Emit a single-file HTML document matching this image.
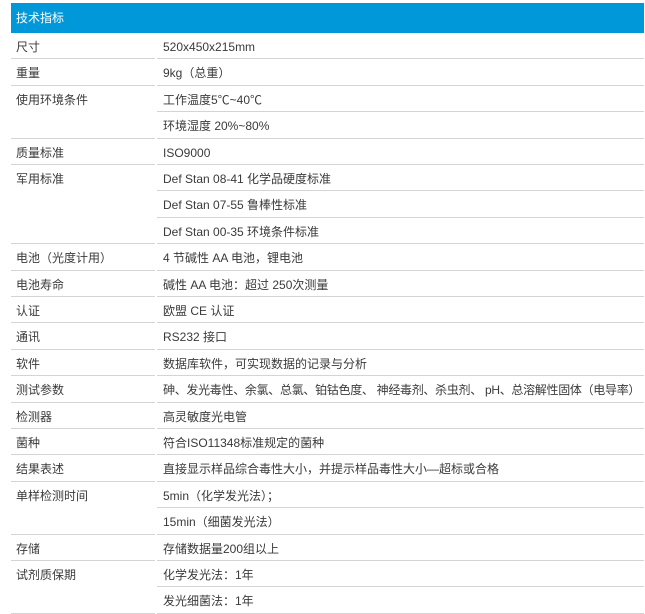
<!DOCTYPE html>
<html><head><meta charset="utf-8"><style>
body{margin:0;background:#fff;width:645px;height:611px;overflow:hidden;position:relative;font-family:"Liberation Sans","Noto Sans CJK SC",sans-serif;font-size:12px;color:#3a3a3a}
.h{position:absolute;left:11px;top:3px;width:633px;height:30px;background:#0098d9;color:#fff;line-height:30px;text-indent:5px}
.c{position:absolute;box-sizing:border-box;border-bottom:1px solid #d4d4d4;padding-left:5px;line-height:28px;white-space:nowrap;overflow:hidden}
.l{left:11px;width:144px}
.r{left:157px;width:487px;padding-left:6px}
</style></head><body>
<div class="h">技术指标</div>
<div class="c l" style="top:33px;height:26px">尺寸</div><div class="c r" style="top:33px;height:26px">520x450x215mm</div>
<div class="c l" style="top:59px;height:27px">重量</div><div class="c r" style="top:59px;height:27px">9kg（总重）</div>
<div class="c l" style="top:86px;height:53px">使用环境条件</div><div class="c r" style="top:86px;height:26px">工作温度5℃~40℃</div>
<div class="c r" style="top:112px;height:27px">环境湿度 20%~80%</div>
<div class="c l" style="top:139px;height:26px">质量标准</div><div class="c r" style="top:139px;height:26px">ISO9000</div>
<div class="c l" style="top:165px;height:79px">军用标准</div><div class="c r" style="top:165px;height:26px">Def Stan 08-41 化学品硬度标准</div>
<div class="c r" style="top:191px;height:27px">Def Stan 07-55 鲁棒性标准</div>
<div class="c r" style="top:218px;height:26px">Def Stan 00-35 环境条件标准</div>
<div class="c l" style="top:244px;height:27px">电池（光度计用）</div><div class="c r" style="top:244px;height:27px">4 节碱性 AA 电池，锂电池</div>
<div class="c l" style="top:271px;height:26px">电池寿命</div><div class="c r" style="top:271px;height:26px">碱性 AA 电池：超过 250次测量</div>
<div class="c l" style="top:297px;height:26px">认证</div><div class="c r" style="top:297px;height:26px">欧盟 CE 认证</div>
<div class="c l" style="top:323px;height:27px">通讯</div><div class="c r" style="top:323px;height:27px">RS232 接口</div>
<div class="c l" style="top:350px;height:26px">软件</div><div class="c r" style="top:350px;height:26px">数据库软件，可实现数据的记录与分析</div>
<div class="c l" style="top:376px;height:27px">测试参数</div><div class="c r" style="top:376px;height:27px;letter-spacing:-0.3px">砷、发光毒性、余氯、总氯、铂钴色度、 神经毒剂、杀虫剂、 pH、总溶解性固体（电导率）</div>
<div class="c l" style="top:403px;height:26px">检测器</div><div class="c r" style="top:403px;height:26px">高灵敏度光电管</div>
<div class="c l" style="top:429px;height:26px">菌种</div><div class="c r" style="top:429px;height:26px">符合ISO11348标准规定的菌种</div>
<div class="c l" style="top:455px;height:27px">结果表述</div><div class="c r" style="top:455px;height:27px">直接显示样品综合毒性大小，并提示样品毒性大小—超标或合格</div>
<div class="c l" style="top:482px;height:53px">单样检测时间</div><div class="c r" style="top:482px;height:26px">5min（化学发光法）；</div>
<div class="c r" style="top:508px;height:27px">15min（细菌发光法）</div>
<div class="c l" style="top:535px;height:26px">存储</div><div class="c r" style="top:535px;height:26px">存储数据量200组以上</div>
<div class="c l" style="top:561px;height:53px">试剂质保期</div><div class="c r" style="top:561px;height:26px">化学发光法：1年</div>
<div class="c r" style="top:587px;height:27px">发光细菌法：1年</div>
</body></html>
